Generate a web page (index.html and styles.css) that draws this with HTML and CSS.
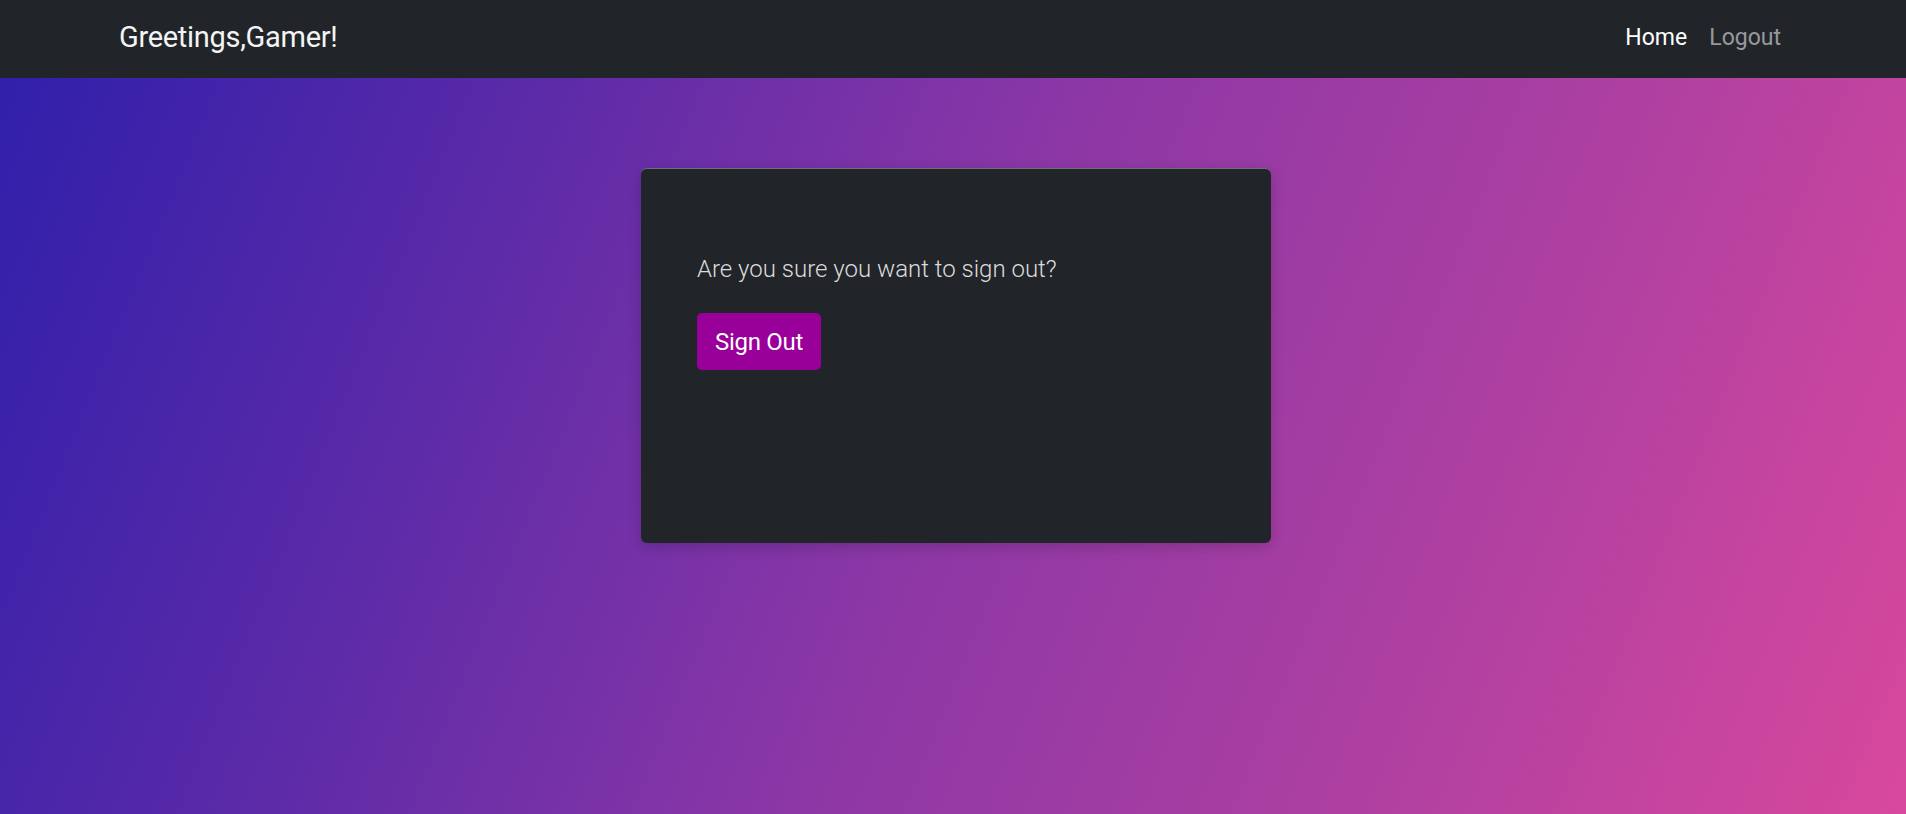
FILE: index.html
```html
<!DOCTYPE html>
<html lang="en">
<head>
<meta charset="utf-8">
<title>Sign Out</title>
<link rel="stylesheet" href="styles.css">
</head>
<body>
<nav class="navbar">
  <a class="brand" href="#">Greetings,Gamer!</a>
  <div class="nav-links">
    <a class="nav-link active" href="#">Home</a>
    <a class="nav-link" href="#">Logout</a>
  </div>
</nav>
<main class="page">
  <section class="card">
    <p class="question">Are you sure you want to sign out?</p>
    <button class="btn-signout" type="button">Sign Out</button>
  </section>
</main>
</body>
</html>
```
FILE: styles.css
```css
html, body {
  margin: 0;
  padding: 0;
  height: 100%;
}
body {
  font-family: Roboto, "Liberation Sans", sans-serif;
  background: linear-gradient(112deg, #2e1fab 0%, #5a2aa8 25%, #8c37a6 50%, #ae40a1 75%, #d8489d 100%);
  min-height: 100vh;
  overflow: hidden;
}
.navbar {
  height: 78px;
  background: #212529;
  display: flex;
  align-items: center;
  justify-content: space-between;
  padding: 0 113px 4px 119px;
  box-sizing: border-box;
}
.brand {
  font-family: Roboto, sans-serif;
  font-size: 29px;
  color: #f4f4f4;
  text-decoration: none;
  letter-spacing: -0.3px;
}
.nav-links {
  display: flex;
}
.nav-link {
  font-family: Roboto, sans-serif;
  font-size: 23px;
  color: rgba(255,255,255,0.55);
  text-decoration: none;
  padding: 0 12px;
}
.nav-link.active {
  color: #ffffff;
  padding-right: 10px;
}
.page {
  display: flex;
  justify-content: center;
  padding-top: 90px;
  padding-left: 6px;
}
.card {
  width: 630px;
  height: 375px;
  box-sizing: border-box;
  background: #212428;
  border-radius: 6px;
  border-top: 1px solid rgba(255,255,255,0.35);
  box-shadow: 0 4px 14px rgba(0,0,0,0.18);
  padding: 82px 56px;
}
.question {
  margin: 0 0 26px;
  font-weight: 300;
  font-size: 24px;
  line-height: 1.5;
  color: #dcdcdc;
}
.btn-signout {
  width: 124px;
  height: 57px;
  background: #990099;
  color: #ffffff;
  border: none;
  border-radius: 5px;
  font-family: Roboto, sans-serif;
  font-size: 24px;
  padding: 0;
  letter-spacing: -0.3px;
}
```
